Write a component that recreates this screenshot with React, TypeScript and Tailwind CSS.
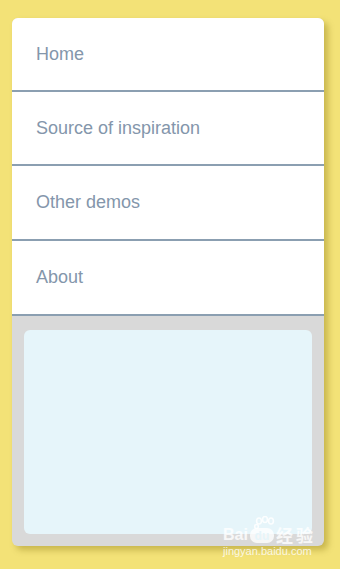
import React from "react";

const items: [string, string][] = [
  ["Home", "h-[74px]"],
  ["Source of inspiration", "h-[74px]"],
  ["Other demos", "h-[75px]"],
  ["About", "h-[75px]"],
];

function Watermark() {
  return (
    <div className="absolute left-[223px] top-[514px] flex flex-col items-start gap-[3px] text-white/80 pointer-events-none">
      <div className="flex items-end gap-[2px] pt-[12px]">
        <span className="text-[16px] font-bold leading-[16px]">Bai</span>
        <span className="relative flex items-center justify-center w-[24px] h-[15px] rounded-[7px] bg-white/80 text-[#e6f5fa] text-[12px] font-bold leading-none">
          du
          <svg className="absolute left-[4px] -top-[12px]" width="22" height="13" viewBox="0 0 22 13">
            <g fill="none" stroke="rgba(255,255,255,0.85)" strokeWidth="1.6">
              <ellipse cx="5" cy="5" rx="2.4" ry="3" />
              <ellipse cx="11" cy="3.5" rx="2.4" ry="3" />
              <ellipse cx="17" cy="5" rx="2.4" ry="3" />
              <ellipse cx="2.5" cy="10.5" rx="1.8" ry="2" />
            </g>
          </svg>
        </span>
        <span
          className="text-[17px] font-bold leading-[17px] tracking-[3px]"
          style={{ fontFamily: '"Noto Sans CJK SC", sans-serif' }}
        >
          经验
        </span>
      </div>
      <span className="text-[11px] leading-[11px] whitespace-nowrap">jingyan.baidu.com</span>
    </div>
  );
}

export default function App() {
  return (
    <div
      className="relative w-[340px] h-[569px] bg-[#f3e277] pt-[18px] px-[12px]"
      style={{ fontFamily: '"Liberation Sans", Arial, sans-serif' }}
    >
      <div className="w-[312px] rounded-[6px] overflow-hidden bg-[#d9d9d9] shadow-[4px_4px_6px_rgba(120,100,0,0.35)]">
        <nav className="flex flex-col bg-white">
          {items.map(([t, h]) => (
            <div
              key={t}
              className={`${h} flex items-center pl-[24px] border-b-2 border-[#8b9fb1] text-[18px] text-[#8496ab]`}
            >
              {t}
            </div>
          ))}
        </nav>
        <div className="px-[12px] pt-[14px] pb-[12px]">
          <div className="h-[204px] rounded-[6px] bg-[#e6f5fa]" />
        </div>
      </div>
      <Watermark />
    </div>
  );
}
